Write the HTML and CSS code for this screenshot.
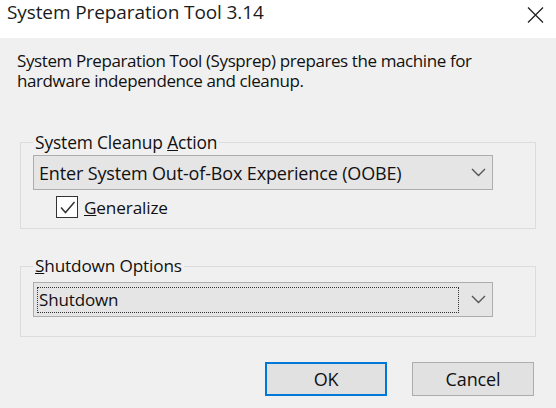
FILE: index.html
```html
<!DOCTYPE html>
<html>
<head>
<meta charset="utf-8">
<link rel="stylesheet" href="styles.css">
</head>
<body>
<div class="window">
  <div class="titlebar">
    <span class="title">System Preparation Tool 3.14</span>
    <svg class="close" width="17" height="16" viewBox="0 0 17 16"><path d="M1 0.5 L16 15.5 M16 0.5 L1 15.5" stroke="#222" stroke-width="1.3" fill="none"/></svg>
  </div>
  <div class="body">
    <p class="desc">System Preparation Tool (Sysprep) prepares the machine for hardware independence and cleanup.</p>
    <fieldset class="group group-cleanup">
      <legend>System Cleanup <u>A</u>ction</legend>
      <div class="combo">
        <span class="combo-text">Enter System Out-of-Box Experience (OOBE)</span>
        <svg class="chev" width="15" height="9" viewBox="0 0 15 9"><path d="M1 1 L7.5 7.5 L14 1" stroke="#555" stroke-width="1.4" fill="none"/></svg>
      </div>
      <label class="check">
        <span class="box"><svg width="17" height="17" viewBox="0 0 17 17"><path d="M2 8.5 L6.5 13.5 L15.5 3" stroke="#333" stroke-width="1.5" fill="none"/></svg></span>
        <span class="check-label"><u>G</u>eneralize</span>
      </label>
    </fieldset>
    <fieldset class="group group-shutdown">
      <legend><u>S</u>hutdown Options</legend>
      <div class="combo">
        <span class="combo-text focus">Shutdown</span>
        <svg class="chev" width="15" height="9" viewBox="0 0 15 9"><path d="M1 1 L7.5 7.5 L14 1" stroke="#555" stroke-width="1.4" fill="none"/></svg>
      </div>
    </fieldset>
    <div class="buttons">
      <button class="btn btn-default">OK</button>
      <button class="btn">Cancel</button>
    </div>
  </div>
</div>
</body>
</html>
```
FILE: styles.css
```css
* { box-sizing: border-box; }
html, body { margin: 0; padding: 0; }
body {
  width: 556px;
  height: 408px;
  background: #f0f0f0;
  font-family: "Open Sans", "Noto Sans", sans-serif;
  font-size: 18px;
  letter-spacing: -0.15px;
  color: #111;
  overflow: hidden;
}
.titlebar {
  height: 38px;
  background: #ffffff;
  display: flex;
  align-items: flex-start;
  justify-content: space-between;
  padding: 0 12px 0 7px;
}
.title {
  font-size: 19px;
  line-height: 25px;
  letter-spacing: -0.1px;
  color: #1b1b1b;
}
.close { margin-top: 7px; }
.body {
  padding: 13px 20px 0 20px;
}
.desc {
  margin: 0 0 0 -3px;
  font-size: 17px;
  letter-spacing: -0.4px;
  line-height: 20px;
  width: 480px;
}
.group {
  margin: 41px 0 0 0;
  padding: 0 42px 10px 12px;
  border: 1px solid #dcdcdc;
  min-width: 0;
}
.group legend {
  padding: 0 2px;
  margin-left: 0;
  line-height: 20px;
  font-size: 17.4px;
}
.group-shutdown { margin-top: 27px; padding-bottom: 19px; }
.group-shutdown legend { font-size: 17.2px; }
.combo {
  height: 35px;
  margin-top: 3px;
  background: #e5e5e5;
  border: 1px solid #adadad;
  display: flex;
  align-items: center;
  justify-content: space-between;
  padding: 0 6px 0 4px;
}
.group-shutdown .combo { margin-top: 6px; font-size: 17px; }
.combo-text {
  padding: 0 0 0 1px;
  line-height: 24px;
}
.combo-text.focus {
  flex: 1;
  border: 1px dotted #333;
  margin-left: -1px;
  margin-right: 12px;
  height: 26px;
}
.check {
  display: flex;
  align-items: center;
  gap: 6px;
  margin: 6px 0 0 23px;
  height: 22px;
}
.check-label { font-size: 17.2px; }
.box {
  width: 22px;
  height: 22px;
  border: 1.5px solid #333;
  background: #fff;
  display: flex;
  align-items: center;
  justify-content: center;
}
.buttons {
  display: flex;
  justify-content: flex-end;
  gap: 25px;
  margin-top: 25px;
  padding-right: 2px;
}
.btn {
  width: 122px;
  height: 34px;
  background: #e1e1e1;
  border: 1px solid #adadad;
  font-family: inherit;
  font-size: 18px;
  letter-spacing: -0.15px;
  color: #111;
  padding: 0;
}
.btn-default {
  border: 2px solid #0078d7;
}
```
